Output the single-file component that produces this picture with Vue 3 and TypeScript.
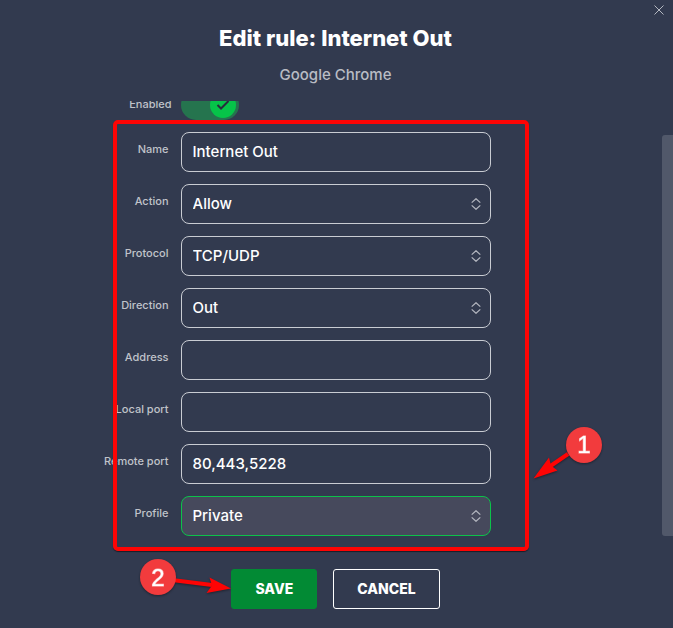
<script setup lang="ts">
import { reactive } from 'vue'

interface Field {
  key: 'name' | 'action' | 'protocol' | 'direction' | 'address' | 'localPort' | 'remotePort' | 'profile'
  label: string
  options?: string[]
}

const fields: Field[] = [
  { key: 'name', label: 'Name' },
  { key: 'action', label: 'Action', options: ['Allow'] },
  { key: 'protocol', label: 'Protocol', options: ['TCP/UDP'] },
  { key: 'direction', label: 'Direction', options: ['Out'] },
  { key: 'address', label: 'Address' },
  { key: 'localPort', label: 'Local port' },
  { key: 'remotePort', label: 'Remote port' },
  { key: 'profile', label: 'Profile', options: ['Private'] },
]

const rule = reactive({
  enabled: true,
  name: 'Internet Out',
  action: 'Allow',
  protocol: 'TCP/UDP',
  direction: 'Out',
  address: '',
  localPort: '',
  remotePort: '80,443,5228',
  profile: 'Private',
})
</script>

<template>
  <main class="dialog">
    <button class="close" type="button" aria-label="Close">
      <svg width="10" height="10" viewBox="0 0 10 10"><path d="M.5 .5l9 9M9.5 .5l-9 9" /></svg>
    </button>

    <header class="head">
      <h1>Edit rule: Internet Out</h1>
      <p>Google Chrome</p>
    </header>

    <form class="form" @submit.prevent>
      <div class="viewport">
        <div class="rows">
          <div class="row toggle-row">
            <label class="label" for="enabled">Enabled</label>
            <span class="toggle">
              <input id="enabled" v-model="rule.enabled" type="checkbox" />
              <svg class="knob" width="26" height="26" viewBox="0 0 26 26">
                <circle cx="13" cy="13" r="13" />
                <path d="M7.500 13l3.500 3.500 7.500-7.500" />
              </svg>
            </span>
          </div>

          <div v-for="field in fields" :key="field.key" class="row">
            <label class="label" :for="field.key">{{ field.label }}</label>
            <span class="control">
              <template v-if="field.options">
                <select
                  :id="field.key"
                  v-model="rule[field.key]"
                  class="box"
                  :class="{ active: field.key === 'profile' }"
                >
                  <option v-for="option in field.options" :key="option">{{ option }}</option>
                </select>
                <svg class="chevrons" width="10" height="12" viewBox="0 0 10 12">
                  <path d="M.7 4.6L5 .7l4.3 3.9M.7 7.4L5 11.3l4.3-3.9" />
                </svg>
              </template>
              <input v-else :id="field.key" v-model="rule[field.key]" class="box" type="text" />
            </span>
          </div>
        </div>
        <span class="scroll-thumb"></span>
      </div>

      <footer class="actions">
        <button class="btn save" type="submit">SAVE</button>
        <button class="btn cancel" type="button">CANCEL</button>
      </footer>
    </form>

    <div class="notes">
      <div class="frame"></div>
      <svg class="callout one" width="72" height="56" viewBox="0 0 72 56">
        <path d="M36 28L17 41" class="shaft" />
        <path d="M1.500 52.500L17 31.500 19 39.500 25.500 44.500Z" class="tip" />
        <circle cx="52" cy="19" r="18" />
        <text x="52" y="27">1</text>
      </svg>
      <svg class="callout two" width="96" height="42" viewBox="0 0 96 42">
        <path d="M34 23L74 28" class="shaft" />
        <path d="M93 31.500L71.500 20.500 74 28.500 68.500 36Z" class="tip" />
        <circle cx="20" cy="20" r="18" />
        <text x="20" y="29">2</text>
      </svg>
    </div>
  </main>
</template>

<style>
body {
  background: #323a4f;
}
</style>

<style scoped>
.dialog {
  position: relative;
  box-sizing: border-box;
  min-height: 100vh;
  padding: 24px 0 19px;
  background: #323a4f;
  color: #fff;
  font-family: "Inter", "Liberation Sans", sans-serif;
}

.close {
  position: absolute;
  top: 5px;
  right: 9px;
  display: flex;
  padding: 0;
  border: 0;
  background: none;
}

.close path {
  fill: none;
  stroke: #b4b8c1;
  stroke-width: 1;
}

.head {
  padding-right: 2px;
  text-align: center;
}

h1 {
  margin: 0;
  font-size: 22px;
  line-height: 28px;
  font-weight: 800;
}

.head p {
  margin: 13px 0 16px;
  color: #b9bcc4;
  font-size: 15px;
  font-weight: 500;
  line-height: 20px;
}

.viewport {
  position: relative;
  overflow: hidden;
}

.rows {
  display: flex;
  flex-direction: column;
  gap: 12px;
  margin-top: -11px;
  padding: 0 2px 16px 0;
}

.row {
  display: grid;
  grid-template-columns: minmax(0, 1fr) 310px minmax(0, 1fr);
  align-items: center;
}

.label {
  justify-self: end;
  margin-right: 12px;
  padding-bottom: 6px;
  color: #c0c3ca;
  font-size: 11px;
  font-weight: 500;
  line-height: 16px;
  white-space: nowrap;
}

.toggle-row .label {
  margin-right: 9px;
  padding-bottom: 2px;
}

.toggle {
  position: relative;
  width: 58px;
  height: 30px;
}

.toggle input {
  appearance: none;
  display: block;
  width: 100%;
  height: 100%;
  margin: 0;
  border-radius: 15px;
  background: #25744e;
}

.knob {
  position: absolute;
  top: 2px;
  right: 3px;
  pointer-events: none;
}

.knob circle {
  fill: #06c449;
}

.knob path {
  fill: none;
  stroke: #262c3c;
  stroke-width: 2;
}

.control {
  position: relative;
  display: block;
}

.box {
  appearance: none;
  display: block;
  box-sizing: border-box;
  width: 100%;
  height: 40px;
  padding: 0 11px 2px;
  border: 1px solid #c9ccd3;
  border-radius: 8px;
  outline: 0;
  background: transparent;
  color: #fff;
  font-family: inherit;
  font-size: 15px;
  font-weight: 500;
}

.box.active {
  border-color: #0cc24a;
  background: #46495c;
}

.chevrons {
  position: absolute;
  top: 14px;
  right: 10px;
  pointer-events: none;
}

.chevrons path {
  fill: none;
  stroke: #b4b7c0;
  stroke-width: 1.2;
}

.scroll-thumb {
  position: absolute;
  top: 34px;
  right: 0;
  bottom: 16px;
  width: 11px;
  border-radius: 3px 0 0 3px;
  background: #51586a;
}

.actions {
  display: flex;
  justify-content: center;
  gap: 16px;
  padding: 17px 2px 0 0;
}

.btn {
  height: 40px;
  padding: 0 23px 2px;
  border: 1px solid #fff;
  border-radius: 3px;
  background: transparent;
  color: #fff;
  font-family: inherit;
  font-size: 14px;
  font-weight: 800;
}

.save {
  border-color: #028a34;
  background: #028a34;
}

.notes {
  position: absolute;
  top: 0;
  left: 50%;
  pointer-events: none;
}

.frame {
  position: absolute;
  top: 120px;
  left: -224px;
  box-sizing: border-box;
  width: 416px;
  height: 431px;
  border: 4px solid #fe0404;
  border-radius: 5px;
  box-shadow: 0 1px 1px rgba(0, 0, 0, 0.5);
}

.callout {
  position: absolute;
  overflow: visible;
  filter: drop-shadow(0 1px 1px rgba(0, 0, 0, 0.4));
}

.one {
  top: 426px;
  left: 195px;
}

.two {
  top: 557px;
  left: -199px;
}

.callout circle {
  fill: #f23b3d;
}

.callout text {
  fill: #fff;
  stroke: rgba(255, 255, 255, 0.6);
  stroke-width: 1;
  font-family: "Liberation Sans", sans-serif;
  font-size: 24px;
  text-anchor: middle;
}

.shaft {
  stroke: #fe0404;
  stroke-width: 4;
}

.tip {
  fill: #fe0404;
}
</style>
